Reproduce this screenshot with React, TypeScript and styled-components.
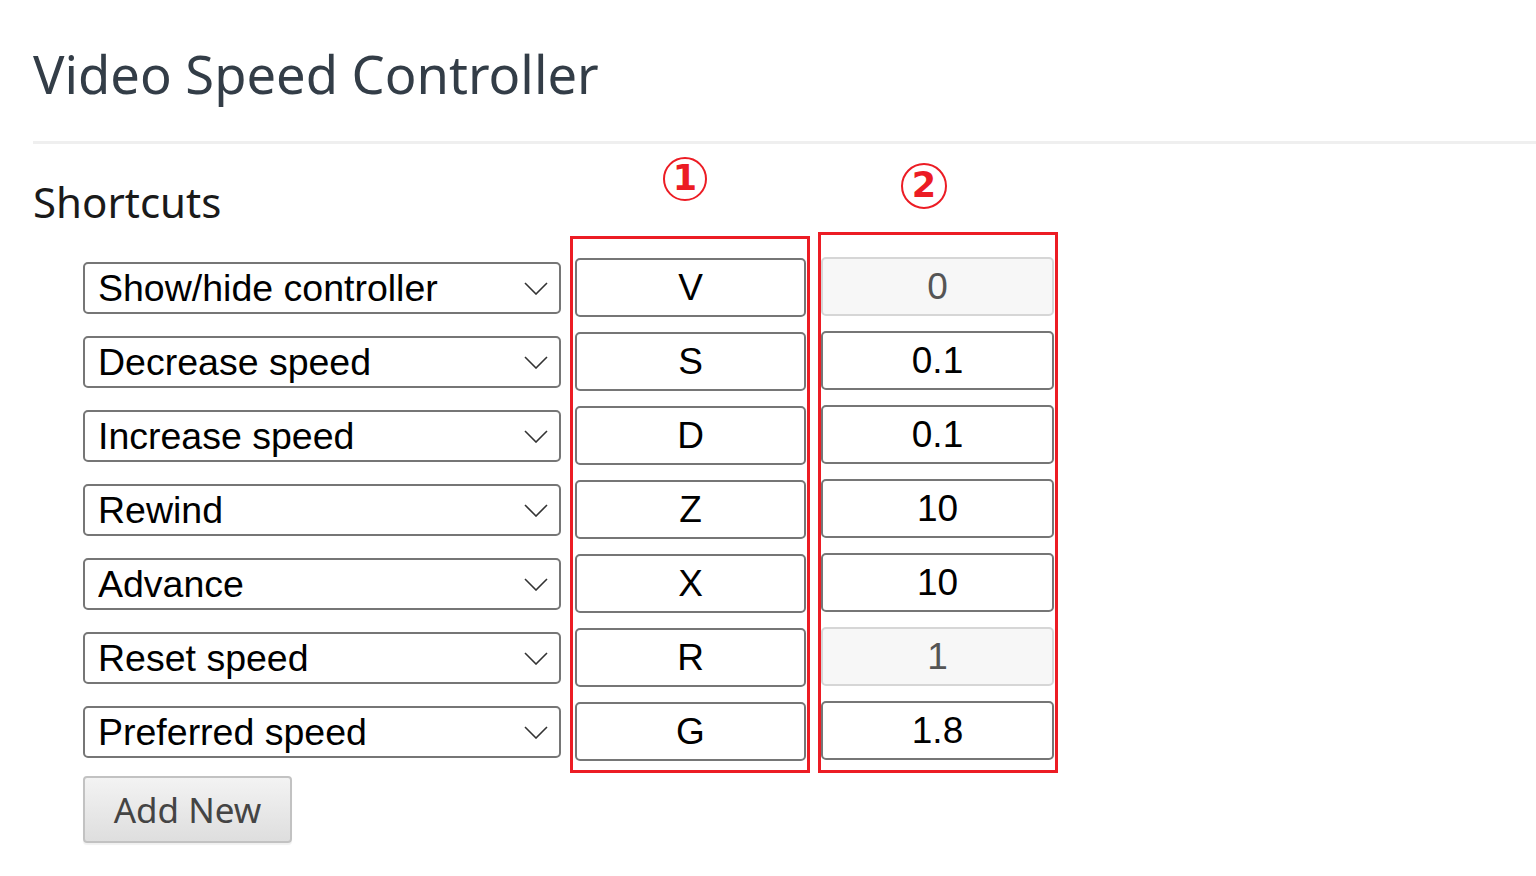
import React from "react";
import styled, { createGlobalStyle } from "styled-components";

const GlobalStyle = createGlobalStyle`
  html, body {
    margin: 0;
    padding: 0;
    background: #ffffff;
  }
  body {
    font-family: "Noto Sans", "Liberation Sans", sans-serif;
  }
  * { box-sizing: border-box; }
`;

const Page = styled.div`
  padding-left: 33px;
  width: 1536px;
  min-height: 876px;
`;

const Header = styled.header`
  border-bottom: 3px solid #efefef;
  padding-top: 46px;
  padding-bottom: 39px;
`;

const Title = styled.h1`
  margin: 0;
  font-family: "Noto Sans", sans-serif;
  font-weight: 400;
  font-size: 52.5px;
  line-height: 56px;
  color: #333d47;
`;

const Body = styled.div`
  display: flex;
  align-items: flex-start;
`;

const LeftColumn = styled.div`
  width: 528px;
  display: flex;
  flex-direction: column;
`;

const SectionTitle = styled.h2`
  margin: 34px 0 0 0;
  font-family: "Noto Sans", sans-serif;
  font-weight: 400;
  font-size: 42px;
  line-height: 48px;
  color: #1a1a1a;
`;

const SelectList = styled.div`
  margin-top: 36px;
  padding-left: 50px;
  display: flex;
  flex-direction: column;
  gap: 22px;
`;

const SelectWrap = styled.div`
  position: relative;
  width: 478px;
  height: 52px;
`;

const Select = styled.select`
  appearance: none;
  -webkit-appearance: none;
  width: 100%;
  height: 100%;
  border: 2px solid #767676;
  border-radius: 5px;
  background: #ffffff;
  padding: 0 50px 0 13px;
  font-family: "Liberation Sans", Arial, sans-serif;
  font-size: 37.5px;
  color: #000000;
  outline: none;
`;

const Chevron = styled.svg`
  position: absolute;
  right: 13px;
  top: 20px;
  width: 24px;
  height: 13px;
  pointer-events: none;
`;

const AddButton = styled.button`
  margin: 18px 0 0 50px;
  width: 209px;
  height: 67px;
  border: 2px solid #c2c2c2;
  border-radius: 4px;
  background: linear-gradient(#f3f3f3, #dedede);
  box-shadow: 0 2px 1px rgba(0, 0, 0, 0.06);
  font-family: "Noto Sans", sans-serif;
  font-size: 35px;
  color: #444444;
  padding: 0;
  align-self: flex-start;
`;

const AnnotatedColumn = styled.div<{ $gap: number }>`
  width: 240px;
  margin-left: ${(p) => p.$gap}px;
  display: flex;
  flex-direction: column;
`;

const Marker = styled.div<{ $size: number; $shift: number; $top: number; $space: number }>`
  width: ${(p) => p.$size}px;
  height: ${(p) => p.$size}px;
  margin: ${(p) => p.$top}px 0 ${(p) => p.$space}px 0;
  align-self: center;
  transform: translateX(${(p) => p.$shift}px);
  border: 2px solid #ec1c24;
  border-radius: 50%;
  display: flex;
  align-items: center;
  justify-content: center;
  font-family: "DejaVu Sans", sans-serif;
  font-weight: 700;
  font-size: 35px;
  line-height: 1;
  color: #ec1c24;
  padding-bottom: 1px;
`;

const RedBox = styled.div<{ $top: number; $bottom: number; $left: number }>`
  border: 3px solid #ec1c24;
  padding: ${(p) => p.$top}px 1px ${(p) => p.$bottom}px ${(p) => p.$left}px;
  display: flex;
  flex-direction: column;
  gap: 15px;
`;

const Field = styled.input<{ $muted?: boolean }>`
  width: 100%;
  height: 59px;
  border: 2px solid ${(p) => (p.$muted ? "#d6d6d6" : "#767676")};
  border-radius: 5px;
  background: ${(p) => (p.$muted ? "#f7f7f7" : "#ffffff")};
  text-align: center;
  font-family: "Liberation Sans", Arial, sans-serif;
  font-size: 37px;
  color: ${(p) => (p.$muted ? "#555555" : "#000000")};
  padding: 0;
  outline: none;
  &:disabled {
    opacity: 1;
    -webkit-text-fill-color: #555555;
  }
`;

type Row = { action: string; key: string; value: string; fixed?: boolean };

const rows: Row[] = [
  { action: "Show/hide controller", key: "V", value: "0", fixed: true },
  { action: "Decrease speed", key: "S", value: "0.1" },
  { action: "Increase speed", key: "D", value: "0.1" },
  { action: "Rewind", key: "Z", value: "10" },
  { action: "Advance", key: "X", value: "10" },
  { action: "Reset speed", key: "R", value: "1", fixed: true },
  { action: "Preferred speed", key: "G", value: "1.8" },
];

const ChevronIcon = () => (
  <Chevron viewBox="0 0 24 13" fill="none">
    <path d="M1 1 L12 12 L23 1" stroke="#333" strokeWidth="1.6" />
  </Chevron>
);

export default function App() {
  return (
    <>
      <GlobalStyle />
      <Page>
        <Header>
          <Title>Video Speed Controller</Title>
        </Header>
        <Body>
          <LeftColumn>
            <SectionTitle>Shortcuts</SectionTitle>
            <SelectList>
              {rows.map((r) => (
                <SelectWrap key={r.action}>
                  <Select defaultValue={r.action}>
                    {rows.map((o) => (
                      <option key={o.action} value={o.action}>
                        {o.action}
                      </option>
                    ))}
                  </Select>
                  <ChevronIcon />
                </SelectWrap>
              ))}
            </SelectList>
            <AddButton>Add New</AddButton>
          </LeftColumn>
          <AnnotatedColumn $gap={9}>
            <Marker $size={44} $shift={-5} $top={13} $space={35}>1</Marker>
            <RedBox $top={19} $bottom={9} $left={2}>
              {rows.map((r) => (
                <Field key={r.key} defaultValue={r.key} readOnly />
              ))}
            </RedBox>
          </AnnotatedColumn>
          <AnnotatedColumn $gap={8}>
            <Marker $size={46} $shift={-14} $top={19} $space={23}>2</Marker>
            <RedBox $top={22} $bottom={10} $left={0}>
              {rows.map((r) => (
                <Field
                  key={r.key}
                  defaultValue={r.value}
                  $muted={r.fixed}
                  disabled={r.fixed}
                />
              ))}
            </RedBox>
          </AnnotatedColumn>
        </Body>
      </Page>
    </>
  );
}
